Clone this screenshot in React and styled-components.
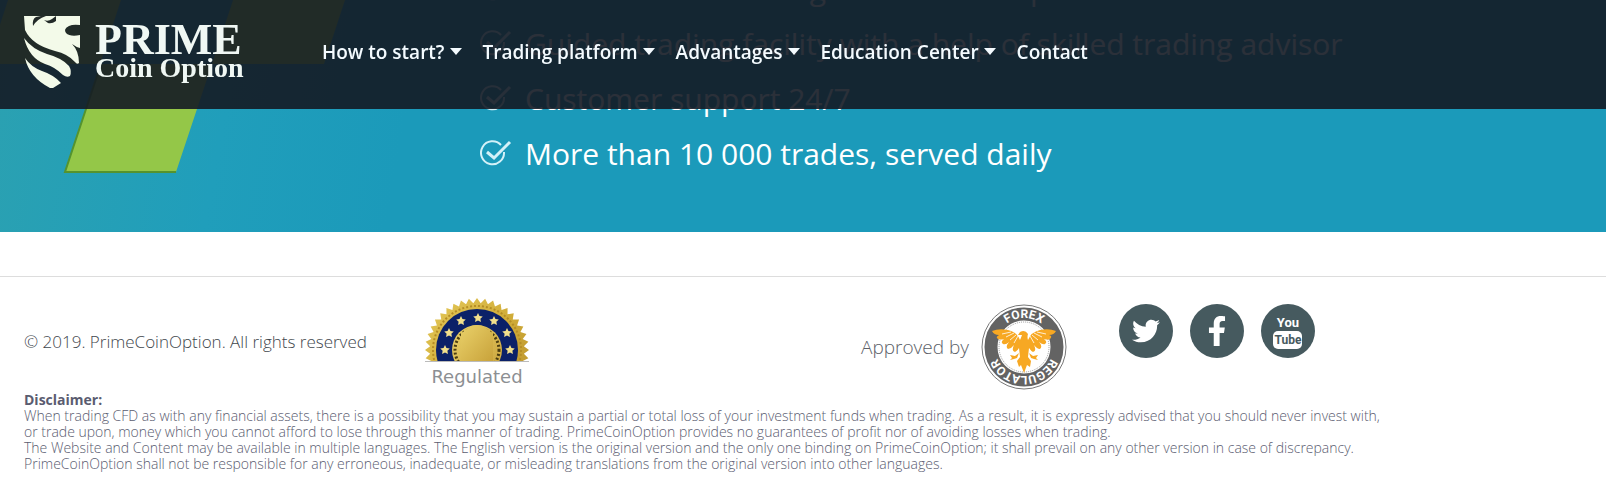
import React from 'react';
import styled, { createGlobalStyle } from 'styled-components';
import { FaTwitter, FaFacebookF } from 'react-icons/fa';

const navItems = [
  { label: 'How to start?', menu: true },
  { label: 'Trading platform', menu: true },
  { label: 'Advantages', menu: true },
  { label: 'Education Center', menu: true },
  { label: 'Contact', menu: false },
];

const benefits = [
  'Clear and fast trading tools and no spread',
  'Guided trading facility with a help of skilled trading advisor',
  'Customer support 24/7',
  'More than 10 000 trades, served daily',
];

const ShieldLogo = () => (
  <svg width="58" height="72" viewBox="0 0 58 72" fill="#f3fae9" aria-hidden="true">
    <path d="M0 0H56V9Q49 8 45 10Q39 13 42 17Q46 21 56 19V32Q52 31 48 28Q55 35 55 47Q53 49 51 46Q44 38 31 35Q8 29 1 14Z" />
    <path d="M0 22Q8 33 23 38Q38 42 45 50Q48 55 46 60Q43 62 39 59Q31 51 21 48Q5 42 0 22Z" />
    <path d="M1 42Q7 51 18 55Q30 59 37 67L29 72H26Q5 61 1 42Z" />
    <path d="M9 10Q8 3 12 1L17 0H22Q13 3 9 10ZM20 4Q24 6 28 3L32 0V5Q28 8 24 7Z" fill="#222a28" />
  </svg>
);

const CheckIcon = () => (
  <svg width="32" height="28" viewBox="0 0 32 28" fill="none" stroke="#d3f1f8" aria-hidden="true">
    <path d="M21 5A11.5 11.5 0 1 0 24 12" strokeWidth="2" />
    <path d="M7 12L14 18L30 2" strokeWidth="3" />
  </svg>
);

const starPoints = (cx, cy, r) =>
  Array.from({ length: 10 }, (_, i) => {
    const radius = i % 2 ? r * 0.5 : r;
    const a = (i * Math.PI) / 5 - Math.PI / 2;
    return `${cx + radius * Math.cos(a)},${cy + radius * Math.sin(a)}`;
  }).join(' ');

const sealEdge = Array.from({ length: 80 }, (_, i) => {
  const radius = i % 2 ? 47 : 52;
  const a = (i * Math.PI) / 40;
  return `${52 + radius * Math.cos(a)},${52 + radius * Math.sin(a)}`;
}).join(' ');

const sealStars = [[20, 52], [24, 35], [36, 23], [53, 20], [69, 23], [82, 35], [85, 52]];

const SealIcon = () => (
  <svg width="104" height="64" viewBox="0 0 104 64" aria-hidden="true">
    <defs>
      <linearGradient id="gold" x1="0" y1="0" x2="1" y2="1">
        <stop offset="0" stopColor="#e6cb5c" />
        <stop offset="0.5" stopColor="#d0ac38" />
        <stop offset="1" stopColor="#b8902c" />
      </linearGradient>
      <linearGradient id="goldFace" x1="0" y1="0" x2="1" y2="1">
        <stop offset="0" stopColor="#e9d069" />
        <stop offset="1" stopColor="#c8a23a" />
      </linearGradient>
    </defs>
    <polygon points={sealEdge} fill="url(#gold)" />
    <circle cx="52" cy="52" r="44" fill="none" stroke="#b58d25" strokeWidth="2" strokeDasharray="2 2" />
    <circle cx="52" cy="52" r="41" fill="#0b2168" />
    <circle cx="52" cy="52" r="25" fill="url(#goldFace)" />
    <circle cx="52" cy="52" r="22" fill="none" stroke="#4a3c10" strokeWidth="3" strokeDasharray="2 2" />
    <path d="M36 64V36Q52 18 68 36V64Z" fill="url(#goldFace)" />
    {sealStars.map(([x, y]) => (
      <polygon key={`${x}-${y}`} points={starPoints(x, y, 5)} fill="#f2e08c" />
    ))}
    <path d="M0 63.5H104" stroke="#bbb" />
  </svg>
);

const ForexBadge = () => (
  <svg width="86" height="86" viewBox="0 0 86 86" role="img" aria-label="Forex Regulator">
    <defs>
      <path id="badgeTop" d="M14 43A29 29 0 0 1 72 43" />
      <path id="badgeBottom" d="M72 43A29 29 0 0 1 14 43" />
    </defs>
    <circle cx="43" cy="43" r="42" fill="#fff" stroke="#777" />
    <circle cx="43" cy="43" r="33" fill="none" stroke="#636363" strokeWidth="13" />
    <circle cx="43" cy="43" r="25" fill="none" stroke="#999" strokeDasharray="1 1" />
    <g fill="#fff" fontFamily="Roboto, sans-serif" fontSize="12" fontWeight="700" textAnchor="middle">
      <text>
        <textPath href="#badgeTop" startOffset="50%">FOREX</textPath>
      </text>
      <text>
        <textPath href="#badgeBottom" startOffset="50%">REGULATOR</textPath>
      </text>
    </g>
    <g fill="#f7a823">
      <path d="M39 36Q36 28 27 26Q18 24 11 27Q13 31 18 31Q14 33 17 35Q20 36 23 35Q19 38 22 40Q25 41 28 38Q24 43 27 45Q31 44 33 41Q30 47 34 48Q37 46 38 44L39 53L36 57L38 63L40 61L43 69L46 61L49 63L50 57L47 53L48 44Q50 47 52 48Q56 47 53 41Q56 45 59 45Q62 42 58 38Q62 41 64 40Q67 38 63 35Q67 36 69 35Q72 32 68 31Q73 31 75 27Q68 24 59 26Q50 28 47 36Q46 33 47 30Q44 25 39 28L37 31L41 31Q40 34 39 36Z" />
      <path d="M38 49L34 52L29 51L31 54L29 56L33 55L36 54ZM48 49L52 52L57 51L55 54L57 56L53 55L50 54Z" />
    </g>
    <path d="M33 39L37 32M29 36L35 31M25 33L33 29M21 30L30 28M53 39L49 32M57 36L51 31M61 33L53 29M65 30L56 28" stroke="#fff" strokeWidth="0.8" />
  </svg>
);

const YouTubeIcon = () => (
  <svg width="56" height="56" viewBox="0 0 56 56" aria-hidden="true">
    <rect x="13" y="28" width="29" height="18" rx="5" fill="#fff" />
    <g fontFamily="Roboto, sans-serif" fontWeight="700" textAnchor="middle">
      <text x="28" y="24" fontSize="13" fill="#fff">You</text>
      <text x="28" y="41" fontSize="12" fill="#465a5f">Tube</text>
    </g>
  </svg>
);

const App = () => (
  <Page>
    <GlobalStyle />
    <Header>
      <Brand href="#home">
        <ShieldLogo />
        <BrandName>
          <BrandTitle>PRIME</BrandTitle>
          <BrandSubtitle>Coin Option</BrandSubtitle>
        </BrandName>
      </Brand>
      <Nav>
        {navItems.map((item) => (
          <NavLink key={item.label} href="#nav">
            {item.label}
            {item.menu && <Caret />}
          </NavLink>
        ))}
      </Nav>
    </Header>

    <Hero>
      <HeroShapes viewBox="0 0 345 176" aria-hidden="true">
        <path d="M8 0H121L100 64H-13Z" />
        <path d="M233 0H345L324 64H212Z" />
        <path d="M101 64H212L176 172H65Z" />
        <path d="M101 64L65 172H176" fill="none" stroke="#55932e" strokeWidth="2" />
      </HeroShapes>
      <Benefits>
        {benefits.map((text) => (
          <Benefit key={text}>
            <CheckIcon />
            {text}
          </Benefit>
        ))}
      </Benefits>
    </Hero>

    <Footer>
      <FooterRow>
        <Copyright>© 2019. PrimeCoinOption. All rights reserved</Copyright>
        <Regulated>
          <SealIcon />
          Regulated
        </Regulated>
        <Approved>
          Approved by
          <ForexBadge />
        </Approved>
        <Socials>
          <SocialLink href="#twitter" aria-label="Twitter"><FaTwitter size={28} /></SocialLink>
          <SocialLink href="#facebook" aria-label="Facebook"><FaFacebookF size={30} /></SocialLink>
          <SocialLink href="#youtube" aria-label="YouTube"><YouTubeIcon /></SocialLink>
        </Socials>
      </FooterRow>
      <Disclaimer>
        <strong>Disclaimer:</strong>
        <p>
          When trading CFD as with any financial assets, there is a possibility that you may sustain a partial or total loss of your investment funds when trading. As a result, it is expressly advised that you should never invest with,<br />
          or trade upon, money which you cannot afford to lose through this manner of trading. PrimeCoinOption provides no guarantees of profit nor of avoiding losses when trading.
        </p>
        <p>
          The Website and Content may be available in multiple languages. The English version is the original version and the only one binding on PrimeCoinOption; it shall prevail on any other version in case of discrepancy.
        </p>
        <p>PrimeCoinOption shall not be responsible for any erroneous, inadequate, or misleading translations from the original version into other languages.</p>
      </Disclaimer>
    </Footer>
  </Page>
);

const GlobalStyle = createGlobalStyle`
  * {
    box-sizing: border-box;
  }

  body {
    margin: 0;
    background: #fff;
    font-family: 'Open Sans', 'Noto Sans', sans-serif;
  }

  svg {
    flex: none;
    display: block;
  }
`;

const Page = styled.div`
  overflow-x: hidden;
`;

const Header = styled.header`
  position: fixed;
  top: 0;
  left: 0;
  right: 0;
  z-index: 10;
  display: flex;
  align-items: center;
  height: 109px;
  padding: 0 24px 6px;
  background: rgba(20, 25, 35, 0.9);
`;

const Brand = styled.a`
  display: flex;
  align-items: center;
  gap: 13px;
  width: 298px;
  color: #f0f8f4;
  text-decoration: none;
  font-family: 'Liberation Serif', serif;
  font-weight: 700;
`;

const BrandName = styled.span`
  display: flex;
  flex-direction: column;
`;

const BrandTitle = styled.span`
  font-size: 44px;
  line-height: 32px;
`;

const BrandSubtitle = styled.span`
  font-size: 28px;
  line-height: 24px;
`;

const Nav = styled.nav`
  display: flex;
  gap: 21px;
`;

const NavLink = styled.a`
  display: flex;
  align-items: center;
  gap: 5px;
  color: #f4fbff;
  font-size: 19px;
  font-weight: 600;
  line-height: 28px;
  text-decoration: none;
  white-space: nowrap;
`;

const Caret = styled.span`
  border: 6px solid transparent;
  border-top: 7px solid #f4fbff;
  border-bottom: 0;
`;

const Hero = styled.section`
  position: relative;
  overflow: hidden;
  height: 232px;
  background: linear-gradient(100deg, #2ba1b1 0, #209ebb 240px, #1b9aba 420px);
`;

const HeroShapes = styled.svg`
  position: absolute;
  top: 0;
  left: 0;
  width: 345px;
  height: 176px;
  fill: #94c748;
`;

const Benefits = styled.ul`
  position: relative;
  display: flex;
  flex-direction: column;
  justify-content: flex-end;
  height: 100%;
  margin: 0;
  padding: 0 24px 51px 480px;
  list-style: none;
`;

const Benefit = styled.li`
  display: flex;
  flex: none;
  align-items: center;
  gap: 13px;
  color: #fff;
  font-size: 30px;
  line-height: 55px;
  white-space: nowrap;
`;

const Footer = styled.footer`
  margin-top: 44px;
  padding: 21px 24px 8px;
  border-top: 1px solid #ddd;
`;

const FooterRow = styled.div`
  display: grid;
  grid-template-columns: 401fr 436fr 258fr 463fr;
`;

const Copyright = styled.p`
  margin: 32px 0 0;
  color: #3f474d;
  font-size: 17px;
  font-weight: 300;
  line-height: 24px;
`;

const Regulated = styled.div`
  display: flex;
  flex-direction: column;
  align-items: center;
  justify-self: start;
  color: #8c8f93;
  font-family: 'DejaVu Sans', sans-serif;
  font-size: 18px;
  line-height: 30px;
`;

const Approved = styled.div`
  display: flex;
  align-items: center;
  align-self: start;
  gap: 12px;
  padding-top: 6px;
  color: #5c6168;
  font-size: 19px;
  font-weight: 300;
  white-space: nowrap;
`;

const Socials = styled.div`
  display: flex;
  gap: 17px;
  padding-top: 6px;
`;

const SocialLink = styled.a`
  display: flex;
  align-items: center;
  justify-content: center;
  width: 54px;
  height: 54px;
  border-radius: 50%;
  background: #465a5f;
  color: #fff;
`;

const Disclaimer = styled.div`
  color: #5a5c70;
  font-size: 14px;
  font-weight: 300;
  line-height: 16px;

  strong {
    font-weight: 700;
  }

  p {
    margin: 0;
  }
`;

export default App;
